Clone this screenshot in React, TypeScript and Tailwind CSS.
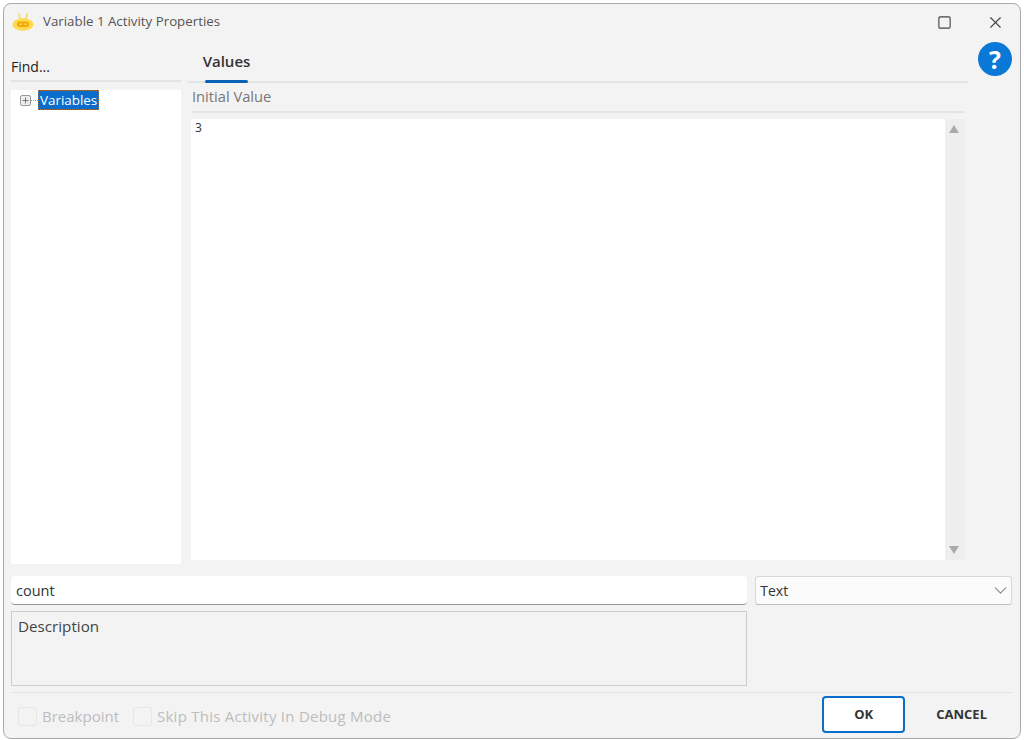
import { ChevronDown, Plus, Square, X } from 'lucide-react'

function BotIcon() {
  return (
    <svg width="22" height="18" viewBox="0 0 22 18">
      <path d="M7 1 8 6M15 1 14 6" stroke="#f7dc74" strokeWidth="1.8" strokeLinecap="round" />
      <ellipse cx="11" cy="11.5" rx="10.5" ry="6.2" fill="#ffd94f" />
      <rect x="5" y="8.5" width="12" height="5.5" rx="2.7" fill="#f5a800" />
      <circle cx="8.5" cy="11.2" r="1" fill="#ffe680" />
      <circle cx="13.5" cy="11.2" r="1" fill="#ffe680" />
    </svg>
  )
}

function Check({ label, className }: { label: string; className?: string }) {
  return (
    <div className="flex items-center gap-[5px]">
      <div className="w-[19px] h-[19px] rounded-[3px] border border-[#e6e6e6] bg-[#f3f3f3]" />
      <span className={`text-[15px] text-[#bdbdbd] ${className ?? ''}`}>{label}</span>
    </div>
  )
}

function App() {
  return (
    <div className="w-[1024px] h-[740px] bg-white pt-[3px] px-[3px] pb-[1px] overflow-hidden font-['Open_Sans',sans-serif]">
      <div className="h-full flex flex-col bg-[#f3f3f3] border border-[#a9a9a9] rounded-[8px] pl-[7px] pr-[8px]">
        {/* title bar */}
        <div className="h-[36px] flex items-center shrink-0">
          <div className="ml-[1px] w-[22px]">
            <BotIcon />
          </div>
          <span className="ml-[9px] text-[13.3px] text-[#555555]">
            Variable 1 Activity Properties
          </span>
          <div className="ml-auto flex items-center gap-[34px] mr-[7px]">
            <Square size={15} strokeWidth={1.8} className="text-[#444444]" />
            <X size={19} strokeWidth={1.4} className="text-[#444444]" />
          </div>
        </div>

        {/* main area */}
        <div className="flex h-[524px] shrink-0">
          <div className="w-[170px] shrink-0 flex flex-col">
            <div className="h-[42px] flex items-end border-b-2 border-[#e4e4e4] pb-[3px] text-[14px] text-[#222222]">
              Find...
            </div>
            <div className="mt-[8px] flex-1 bg-white pl-[9px] flex items-start">
              <div className="flex items-center h-[20px]">
                <div className="w-[11px] h-[11px] border border-[#9a9a9a] rounded-[2px] bg-[#ececec] flex items-center justify-center">
                  <Plus size={9} strokeWidth={2} className="text-[#555577]" />
                </div>
                <div className="w-[7px] border-t border-dotted border-[#999999]" />
                <span className="bg-[#0a6ccb] border border-dotted border-[#a8703a] text-white text-[13.4px] leading-[18px] px-[1px]">
                  Variables
                </span>
              </div>
            </div>
          </div>

          <div className="ml-[7px] w-[780px] shrink-0 flex flex-col">
            <div className="h-[43px] flex items-end border-b-2 border-[#e4e4e4] shrink-0">
              <div className="ml-[17px] w-[43px] text-center">
                <div className="text-[15px] font-semibold text-[#333333] leading-[20px] -mx-[3px]">
                  Values
                </div>
                <div className="mt-[9px] -mb-[2px] h-[3px] rounded-[2px] bg-[#0a62b8]" />
              </div>
            </div>
            <div className="ml-[4px] mr-[3px] h-[30px] flex items-center border-b-2 border-[#e4e4e4] pb-[2px] text-[14.7px] text-[#777777] shrink-0">
              Initial Value
            </div>
            <div className="ml-[3px] mr-[3px] mt-[6px] h-[441px] flex shrink-0">
              <div className="flex-1 bg-white pl-[4px] text-[12px] text-[#333333]">3</div>
              <div className="w-[20px] bg-[#eeeeee] flex flex-col items-center justify-between py-[6px]">
                <div className="-ml-[2px] w-0 h-0 border-x-[5px] border-x-transparent border-b-[8px] border-b-[#aaaaaa]" />
                <div className="-ml-[2px] w-0 h-0 border-x-[5px] border-x-transparent border-t-[8px] border-t-[#aaaaaa]" />
              </div>
            </div>
          </div>

          <div className="ml-[10px]">
            <div className="relative top-[-1px] w-[34px] h-[34px] mt-[3px] rounded-full bg-[#0a78d6] text-white text-[25px] font-bold leading-[34px] text-center">
              ?
            </div>
          </div>
        </div>

        {/* name and type */}
        <div className="mt-[12px] flex shrink-0">
          <div className="flex w-[737px] flex-col">
            <div className="h-[29px] bg-white rounded-[4px] border-b border-[#9a9a9a] pl-[5px] text-[14.5px] leading-[30px] text-[#333333]">
              count
            </div>
            <div className="mt-[6px] h-[75px] border border-[#cccccc] pl-[6px] pt-[3px] text-[15.2px] text-[#444444]">
              Description
            </div>
          </div>
          <div className="ml-[8px] h-[29px] w-[257px] bg-[#fbfbfb] rounded-[3px] border border-[#d8d8d8] border-b-[#bdbdbd] pl-[4px] flex items-center justify-between text-[14px] text-[#333333]">
            Text
            <ChevronDown size={21} strokeWidth={1.3} className="text-[#8a8a8a]" />
          </div>
        </div>

        {/* footer */}
        <div className="mt-[6px] border-t border-[#e2e2e2] flex items-center h-[44px] shrink-0 pl-[7px]">
          <div className="flex items-center gap-[14px] pt-[3px]">
            <Check label="Breakpoint" />
            <Check label="Skip This Activity In Debug Mode" className="tracking-[0.25px]" />
          </div>
          <div className="ml-auto flex items-center">
            <button className="w-[83px] h-[37px] bg-white rounded-[4px] border-2 border-[#0a6ccb] text-[13px] font-bold text-[#333333]">
              OK
            </button>
            <button className="ml-[31px] mr-[25px] text-[13px] font-bold text-[#333333]">CANCEL</button>
          </div>
        </div>
      </div>
    </div>
  )
}

export default App
